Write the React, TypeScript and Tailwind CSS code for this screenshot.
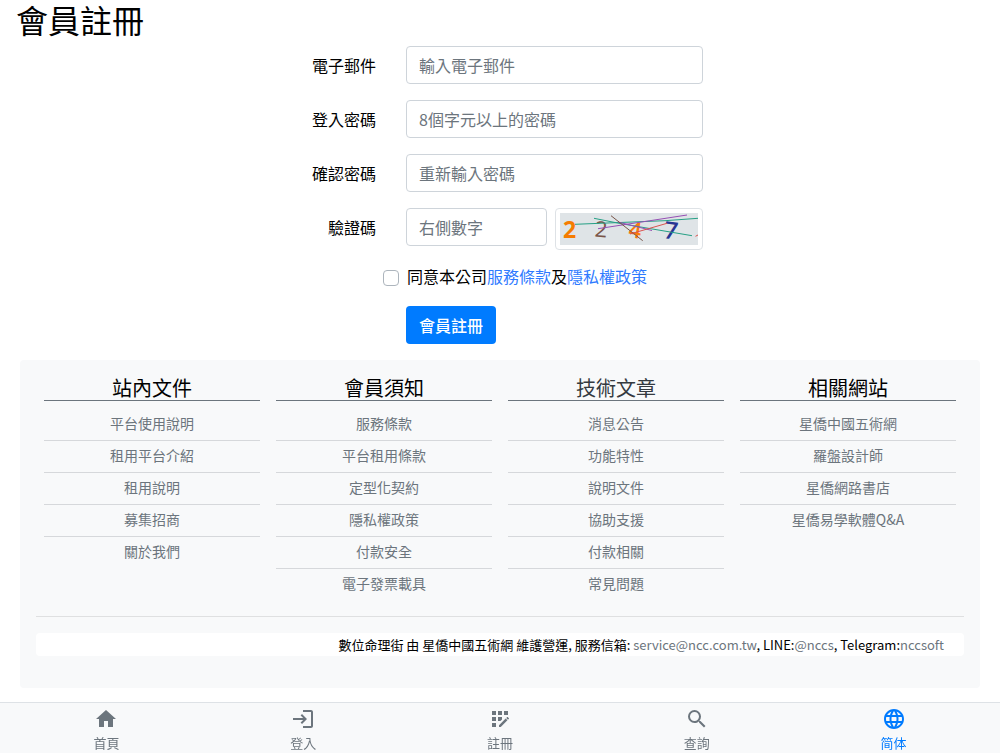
import type { ReactNode } from "react";
import { MdAppRegistration, MdHome, MdLanguage, MdLogin, MdSearch } from "react-icons/md";

const footerColumns = [
  {
    title: "站內文件",
    links: ["平台使用說明", "租用平台介紹", "租用說明", "募集招商", "關於我們"],
  },
  {
    title: "會員須知",
    links: ["服務條款", "平台租用條款", "定型化契約", "隱私權政策", "付款安全", "電子發票載具"],
  },
  {
    title: "技術文章",
    href: "#articles",
    links: ["消息公告", "功能特性", "說明文件", "協助支援", "付款相關", "常見問題"],
  },
  {
    title: "相關網站",
    links: ["星僑中國五術網", "羅盤設計師", "星僑網路書店", "星僑易學軟體Q&A"],
  },
];

const navItems = [
  { label: "首頁", icon: MdHome },
  { label: "登入", icon: MdLogin },
  { label: "註冊", icon: MdAppRegistration },
  { label: "查詢", icon: MdSearch },
  { label: "简体", icon: MdLanguage, active: true },
];

const inputClass =
  "h-[38px] w-full min-w-0 rounded border border-[#ced4da] bg-white px-3 text-base text-[#495057] placeholder:text-[#6c757d]";

function FormRow({ id, label, children }: { id?: string; label?: string; children: ReactNode }) {
  return (
    <div className="mb-4 grid grid-cols-[390fr_329fr_281fr]">
      <div className="pr-[14px] text-right leading-[38px]">
        {label && <label htmlFor={id}>{label}</label>}
      </div>
      <div className="px-4">{children}</div>
    </div>
  );
}

function Captcha() {
  return (
    <div className="w-[148px] shrink-0 rounded border border-[#dee2e6] bg-white p-1">
      <svg viewBox="0 0 138 32" className="block h-8 w-full bg-[#dfe4e7]" role="img" aria-label="驗證碼">
        <g fontFamily="'Open Sans', sans-serif">
          <text x="3" y="25" fontSize="23" fontWeight="700" fill="#f57c00">2</text>
          <text x="35" y="24" fontSize="22" fill="#795548" transform="rotate(5 41 16)">2</text>
          <text x="69" y="25" fontSize="22" fontWeight="600" fill="#fb7c0a" transform="rotate(10 75 17)">4</text>
          <text x="104" y="26" fontSize="24" fontWeight="600" fill="#283593" transform="rotate(8 110 18)">7</text>
        </g>
        <g fill="none" strokeWidth="1">
          <path d="M15 11.3L105 7.7L138 5.3M34 5.3L60 10.5L132 22.7" stroke="#26a085" />
          <path d="M38 15.7L127 2M58 9L92 17.5" stroke="#9650b4" />
          <path d="M51 2.7L82.7 27.7" stroke="#795548" />
          <path d="M70 21L107 10.3M135.5 23.3L138 22" stroke="#d9534f" />
        </g>
      </svg>
    </div>
  );
}

function Footer() {
  return (
    <footer className="mx-5 rounded bg-[#f8f9fa] p-4 pb-8">
      <div className="grid grid-cols-4">
        {footerColumns.map((col) => (
          <div key={col.title} className="px-2 text-center">
            <h2 className="mb-2 border-b border-[#6c757d] text-xl leading-6">
              {col.href ? (
                <a href={col.href} className="text-[#343a40]">{col.title}</a>
              ) : (
                col.title
              )}
            </h2>
            <ul className="divide-y divide-[#d6d8db] text-sm text-[#6c757d]">
              {col.links.map((link) => (
                <li key={link} className="pb-[3px] leading-7">
                  <a href="#">{link}</a>
                </li>
              ))}
            </ul>
          </div>
        ))}
      </div>
      <hr className="my-4 border-[#dfe0e1]" />
      <p className="rounded bg-white px-5 text-right text-[13px] leading-[23px]">
        數位命理街 由 星僑中國五術網 維護營運, 服務信箱:{" "}
        <a href="mailto:service@ncc.com.tw" className="text-[#6c757d]">service@ncc.com.tw</a>, LINE:
        <a href="#line" className="text-[#6c757d]">@nccs</a>, Telegram:
        <a href="#telegram" className="text-[#6c757d]">nccsoft</a>
      </p>
    </footer>
  );
}

export default function App() {
  return (
    <div
      lang="zh-Hant"
      className="flex min-h-screen flex-col bg-white font-['Noto_Sans_CJK_TC',sans-serif] text-base text-black"
    >
      <main>
        <h1 className="mb-2 px-4 text-[32px] leading-[38px]">會員註冊</h1>
        <form onSubmit={(e) => e.preventDefault()}>
          <FormRow id="email" label="電子郵件">
            <input id="email" type="email" placeholder="輸入電子郵件" className={inputClass} />
          </FormRow>
          <FormRow id="password" label="登入密碼">
            <input id="password" type="password" placeholder="8個字元以上的密碼" className={inputClass} />
          </FormRow>
          <FormRow id="confirm" label="確認密碼">
            <input id="confirm" type="password" placeholder="重新輸入密碼" className={inputClass} />
          </FormRow>
          <FormRow id="captcha" label="驗證碼">
            <div className="flex items-start gap-2">
              <input id="captcha" type="text" placeholder="右側數字" className={inputClass} />
              <Captcha />
            </div>
          </FormRow>
          <div className="mb-4 grid grid-cols-[390fr_610fr]">
            <div className="col-start-2 -ml-[7px] flex h-6 items-start gap-2">
              <input
                id="agree"
                type="checkbox"
                className="mt-1 size-4 appearance-none rounded border border-[#adb5bd] bg-white checked:bg-[#007bff]"
              />
              <label htmlFor="agree" className="leading-5">
                同意本公司
                <a href="#terms" className="text-[#2f7bff]">服務條款</a>及
                <a href="#privacy" className="text-[#2f7bff]">隱私權政策</a>
              </label>
            </div>
          </div>
          <FormRow>
            <button type="submit" className="h-[38px] rounded bg-[#007bff] px-[13px] font-medium text-white">
              會員註冊
            </button>
          </FormRow>
        </form>
      </main>

      <Footer />

      <nav className="sticky bottom-0 mt-auto border-t border-[#dee2e6] bg-[#f8f9fa] px-2">
        <ul className="grid h-[50px] grid-cols-5">
          {navItems.map(({ label, icon: Icon, active }) => (
            <li key={label}>
              <a
                href="#"
                className={`flex flex-col items-center pt-1 text-[13px] leading-[23px] ${
                  active ? "text-[#007bff]" : "text-[#6c757d]"
                }`}
              >
                <Icon size={24} aria-hidden />
                <span>{label}</span>
              </a>
            </li>
          ))}
        </ul>
      </nav>
    </div>
  );
}
